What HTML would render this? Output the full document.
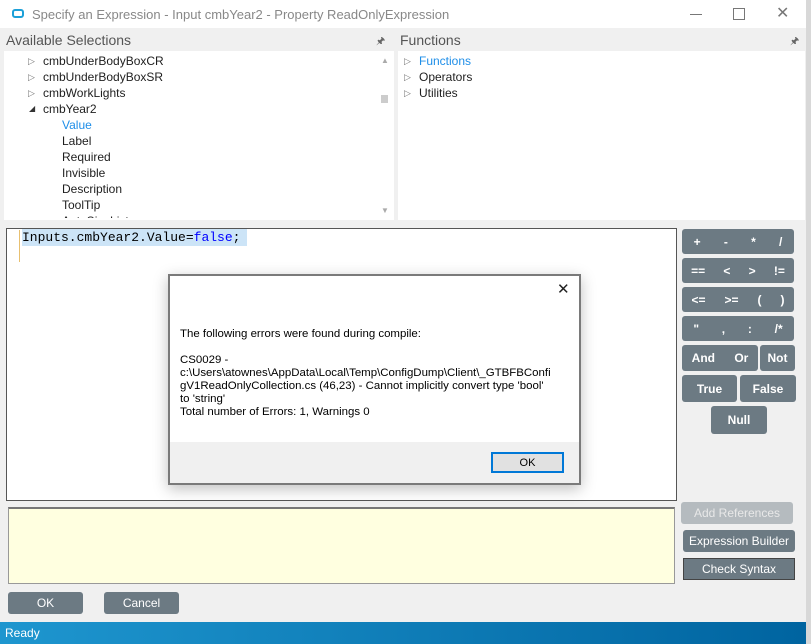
<!DOCTYPE html>
<html><head><style>
body{margin:0;width:811px;height:644px;position:relative;background:#f0f0f0;font-family:"Liberation Sans",sans-serif;overflow:hidden}
.a{position:absolute}
.t{font-size:12px;color:#1e1e1e}
.btn{position:absolute;background:#6c7a83;color:#fff;font-size:12px;font-weight:bold;border-radius:3px;display:flex;align-items:center;justify-content:center}
.nb{font-weight:normal}
.tri{font-size:9px;color:#777}
</style></head><body>
<div class="a" style="left:0;top:0;width:806px;height:28px;background:#fff"></div>
<div class="a" style="left:806px;top:0;width:5px;height:644px;background:#d8d8d8"></div>
<div class="a" style="left:12px;top:9px;width:12px;height:9px;border:2px solid #1ca0d8;border-radius:3px;box-sizing:border-box;background:#fff"></div>
<div class="a" style="left:32px;top:7px;font-size:13px;color:#888">Specify an Expression - Input cmbYear2 - Property ReadOnlyExpression</div>
<div class="a" style="left:690px;top:14px;width:12px;height:1px;background:#777"></div>
<div class="a" style="left:733px;top:8px;width:10px;height:10px;border:1px solid #777"></div>
<div class="a" style="left:776px;top:3px;font-size:16px;color:#777">✕</div>
<div class="a" style="left:4px;top:30px;width:390px;height:190px;background:#fff"></div>
<div class="a" style="left:4px;top:30px;width:390px;height:21px;background:#f0f0f0"></div>
<div class="a" style="left:6px;top:32px;font-size:14px;color:#555">Available Selections</div>
<div class="a" style="left:376px;top:34px;font-size:10px;color:#666">🖈</div>
<div class="a" style="left:398px;top:30px;width:407px;height:190px;background:#fff"></div>
<div class="a" style="left:398px;top:30px;width:407px;height:21px;background:#f0f0f0"></div>
<div class="a" style="left:400px;top:32px;font-size:14px;color:#555">Functions</div>
<div class="a" style="left:790px;top:34px;font-size:10px;color:#666">🖈</div>
<div class="a tri" style="left:28px;top:56px">▷</div><div class="a t" style="left:43px;top:54px">cmbUnderBodyBoxCR</div>
<div class="a tri" style="left:28px;top:72px">▷</div><div class="a t" style="left:43px;top:70px">cmbUnderBodyBoxSR</div>
<div class="a tri" style="left:28px;top:88px">▷</div><div class="a t" style="left:43px;top:86px">cmbWorkLights</div>
<div class="a" style="left:29px;top:104px;font-size:8px;color:#333">◢</div><div class="a t" style="left:43px;top:102px">cmbYear2</div>
<div class="a t" style="left:62px;top:118px;color:#1e8ee8">Value</div>
<div class="a t" style="left:62px;top:134px">Label</div>
<div class="a t" style="left:62px;top:150px">Required</div>
<div class="a t" style="left:62px;top:166px">Invisible</div>
<div class="a t" style="left:62px;top:182px">Description</div>
<div class="a t" style="left:62px;top:198px">ToolTip</div>
<div class="a t" style="left:62px;top:214px;height:4px;overflow:hidden">AutoSizeList</div>
<div class="a" style="left:381px;top:56px;font-size:8px;color:#aaa">▲</div>
<div class="a" style="left:381px;top:95px;width:7px;height:8px;background:#ccc"></div>
<div class="a" style="left:381px;top:206px;font-size:8px;color:#aaa">▼</div>
<div class="a tri" style="left:404px;top:56px">▷</div><div class="a t" style="left:419px;top:54px;color:#1e8ee8">Functions</div>
<div class="a tri" style="left:404px;top:72px">▷</div><div class="a t" style="left:419px;top:70px">Operators</div>
<div class="a tri" style="left:404px;top:88px">▷</div><div class="a t" style="left:419px;top:86px">Utilities</div>
<div class="a" style="left:6px;top:228px;width:669px;height:271px;background:#fff;border:1px solid #555"></div>
<div class="a" style="left:19px;top:230px;width:1px;height:32px;background:#e8c070"></div>
<div class="a" style="left:22px;top:229px;width:225px;height:17px;background:#cce4f7"></div>
<div class="a" style="left:22px;top:230px;font-family:'Liberation Mono',monospace;font-size:13px;color:#000">Inputs.cmbYear2.Value=<span style="color:#0000ff">false</span>;</div>
<div class="btn" style="left:682px;top:229px;width:112px;height:25px;justify-content:space-around">+<span>-</span><span>*</span><span>/</span></div>
<div class="btn" style="left:682px;top:258px;width:112px;height:25px;justify-content:space-around"><span>==</span><span>&lt;</span><span>&gt;</span><span>!=</span></div>
<div class="btn" style="left:682px;top:287px;width:112px;height:25px;justify-content:space-around"><span>&lt;=</span><span>&gt;=</span><span>(</span><span>)</span></div>
<div class="btn" style="left:682px;top:316px;width:112px;height:25px;justify-content:space-around"><span>"</span><span>,</span><span>:</span><span>/*</span></div>
<div class="btn" style="left:682px;top:345px;width:76px;height:26px;justify-content:space-around"><span>And</span><span>Or</span></div>
<div class="btn" style="left:760px;top:345px;width:35px;height:26px">Not</div>
<div class="btn" style="left:682px;top:375px;width:55px;height:27px">True</div>
<div class="btn" style="left:740px;top:375px;width:56px;height:27px">False</div>
<div class="btn" style="left:711px;top:406px;width:56px;height:28px">Null</div>
<div class="a" style="left:8px;top:507px;width:667px;height:77px;background:#ffffe0;border:1px solid #999;border-top:2px solid #777;box-sizing:border-box"></div>
<div class="btn nb" style="left:681px;top:502px;width:112px;height:22px;background:#b5bbbf;color:#e8e8e8">Add References</div>
<div class="btn nb" style="left:683px;top:530px;width:112px;height:22px">Expression Builder</div>
<div class="btn nb" style="left:683px;top:558px;width:112px;height:22px;border-radius:0;border:1px solid #444;box-sizing:border-box">Check Syntax</div>
<div class="btn nb" style="left:8px;top:592px;width:75px;height:22px">OK</div>
<div class="btn nb" style="left:104px;top:592px;width:75px;height:22px">Cancel</div>
<div class="a" style="left:0;top:622px;width:806px;height:22px;background:linear-gradient(90deg,#1e96cf,#0064a0)"></div>
<div class="a" style="left:5px;top:626px;font-size:12px;color:#fff">Ready</div>
<div class="a" style="left:168px;top:274px;width:413px;height:211px;background:#f0f0f0;border:2px solid #7a7a7a;box-sizing:border-box;box-shadow:0 4px 14px rgba(0,0,0,.25)"></div>
<div class="a" style="left:170px;top:276px;width:409px;height:166px;background:#fff"></div>
<div class="a" style="left:557px;top:280px;font-size:15px;color:#222">✕</div>
<div class="a" style="left:180px;top:328px;font-size:11.45px;color:#000;line-height:13px;width:398px;white-space:nowrap">The following errors were found during compile:<br><br>CS0029 -<br>c:\Users\atownes\AppData\Local\Temp\ConfigDump\Client\_GTBFBConfi<br>gV1ReadOnlyCollection.cs (46,23) - Cannot implicitly convert type 'bool'<br>to 'string'<br>Total number of Errors: 1, Warnings 0</div>
<div class="a" style="left:491px;top:452px;width:73px;height:21px;background:#e1e1e1;border:2px solid #0078d7;box-sizing:border-box;font-size:11px;display:flex;align-items:center;justify-content:center">OK</div>
</body></html>
